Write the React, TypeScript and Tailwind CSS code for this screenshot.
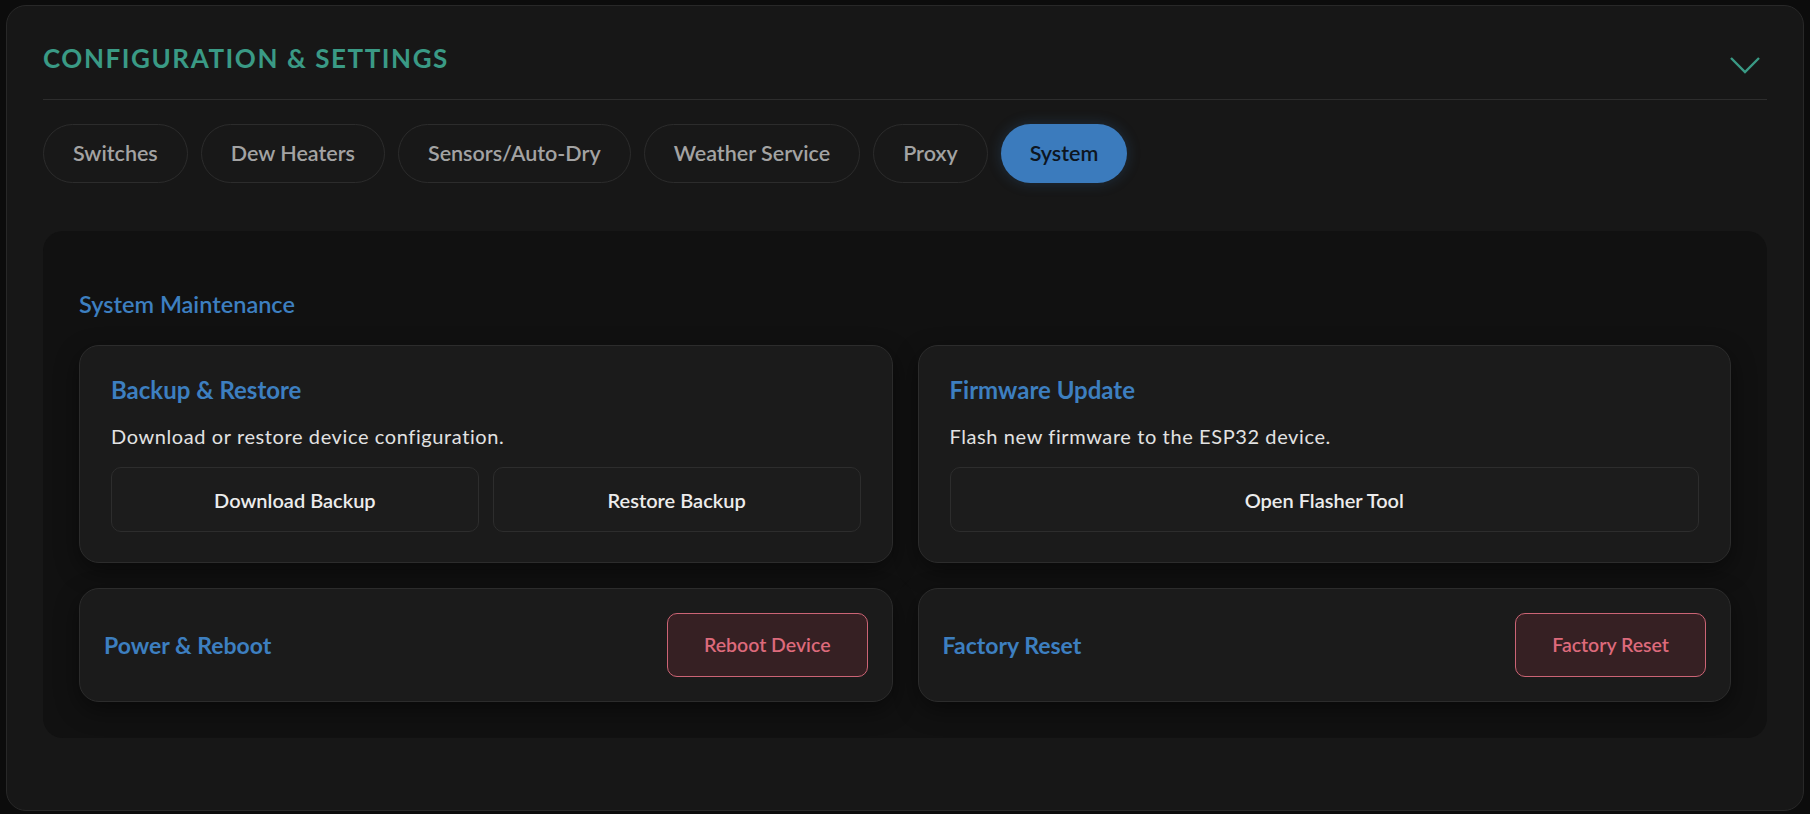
import React, { useState } from 'react';

const TABS = ['Switches', 'Dew Heaters', 'Sensors/Auto-Dry', 'Weather Service', 'Proxy', 'System'];

const ActionButton: React.FC<{ label: string }> = ({ label }) => (
  <button className="h-[65px] w-full rounded-[10px] border border-[#2d2d2d] bg-[#1c1c1c] text-[20px] font-semibold text-[#ececec]">
    {label}
  </button>
);

const DangerButton: React.FC<{ label: string }> = ({ label }) => (
  <button className="h-[64px] rounded-[10px] border border-[#cc6475] bg-[#362023] px-[36px] text-[19.5px] font-semibold text-[#dd6a7b]">
    {label}
  </button>
);

export default function App() {
  const [active, setActive] = useState('System');

  return (
    <div className="h-[814px] bg-[#0c0c0c] px-[6px] pt-[5px] font-['Lato',sans-serif]">
      <div className="h-[806px] rounded-[20px] border border-[#282828] bg-[#171717] px-[36px]">
        {/* header */}
        <div className="flex items-center justify-between border-b border-[#2d2d2d] pt-[36px] pb-[25px]">
          <h2 className="text-[26px] leading-[32px] font-bold tracking-[0.06em] text-[#3a9a85]">
            CONFIGURATION &amp; SETTINGS
          </h2>
          <svg width="30" height="17" viewBox="0 0 30 17" className="mt-[14px] mr-[7px]" fill="none">
            <polyline points="1,1 15,15 29,1" stroke="#3a9a85" strokeWidth="2.4" />
          </svg>
        </div>

        {/* tabs */}
        <div className="mt-[24px] flex gap-[13px]">
          {TABS.map((t) =>
            t === active ? (
              <button
                key={t}
                onClick={() => setActive(t)}
                className="h-[59px] rounded-full bg-[#3b7bbd] px-[29px] text-[21.5px] font-semibold text-[#0d1520] shadow-[0_0_14px_rgba(59,123,189,0.25)]"
              >
                {t}
              </button>
            ) : (
              <button
                key={t}
                onClick={() => setActive(t)}
                className="h-[59px] rounded-full border border-[#2c2c2c] bg-[#181818] px-[29px] text-[21.5px] font-semibold text-[#a3a3a3]"
              >
                {t}
              </button>
            )
          )}
        </div>

        {/* system panel */}
        <div className="mt-[48px] rounded-[20px] bg-[#111111] px-[36px] pt-[59px] pb-[36px]">
          <h3 className="mb-[26px] text-[23.5px] leading-[29px] font-semibold text-[#3d7fc0]">System Maintenance</h3>

          <div className="grid grid-cols-2 gap-[25px]">
            <div className="rounded-[20px] border border-[#2c2c2c] bg-[#1b1b1b] px-[31px] pt-[29px] pb-[30px] shadow-[0_8px_24px_rgba(0,0,0,0.45)]">
              <h4 className="text-[24px] leading-[30px] font-bold text-[#3d7fc0]">Backup &amp; Restore</h4>
              <p className="mt-[18px] text-[20px] leading-[26px] tracking-[0.03em] text-[#e2e2e2]">
                Download or restore device configuration.
              </p>
              <div className="mt-[18px] grid grid-cols-2 gap-[14px]">
                <ActionButton label="Download Backup" />
                <ActionButton label="Restore Backup" />
              </div>
            </div>

            <div className="rounded-[20px] border border-[#2c2c2c] bg-[#1b1b1b] px-[31px] pt-[29px] pb-[30px] shadow-[0_8px_24px_rgba(0,0,0,0.45)]">
              <h4 className="text-[24px] leading-[30px] font-bold text-[#3d7fc0]">Firmware Update</h4>
              <p className="mt-[18px] text-[20px] leading-[26px] tracking-[0.03em] text-[#e2e2e2]">
                Flash new firmware to the ESP32 device.
              </p>
              <div className="mt-[18px]">
                <ActionButton label="Open Flasher Tool" />
              </div>
            </div>

            <div className="flex items-center justify-between rounded-[20px] border border-[#2c2c2c] bg-[#1b1b1b] p-[24px] shadow-[0_8px_24px_rgba(0,0,0,0.45)]">
              <h4 className="text-[23px] leading-[30px] font-bold text-[#3d7fc0]">Power &amp; Reboot</h4>
              <DangerButton label="Reboot Device" />
            </div>

            <div className="flex items-center justify-between rounded-[20px] border border-[#2c2c2c] bg-[#1b1b1b] p-[24px] shadow-[0_8px_24px_rgba(0,0,0,0.45)]">
              <h4 className="text-[23px] leading-[30px] font-bold text-[#3d7fc0]">Factory Reset</h4>
              <DangerButton label="Factory Reset" />
            </div>
          </div>
        </div>
      </div>
    </div>
  );
}
